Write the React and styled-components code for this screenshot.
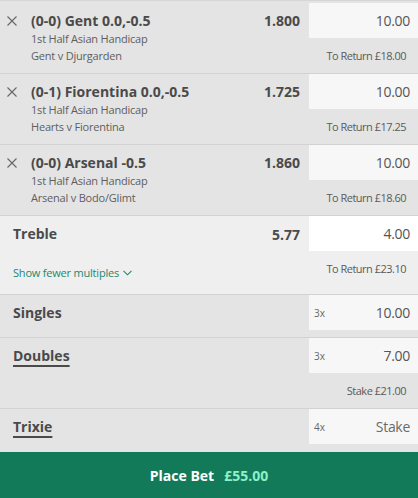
import React from "react";
import styled, { createGlobalStyle } from "styled-components";

const Global = createGlobalStyle`
  html, body { margin: 0; padding: 0; background: #e4e4e4; }
  body { font-family: "Open Sans", "Noto Sans", sans-serif; color: #4a4a4a; }
  * { box-sizing: border-box; }
`;

const Slip = styled.div`
  width: 418px;
  border-top: 1px solid #d6d6d6;
  padding-top: 2px;
  background: #e4e4e4;
`;

const SelectionRow = styled.div`
  display: flex;
  height: 71px;
  background: #e4e4e4;
  border-bottom: 1px solid #d2d2d2;
`;

const Close = styled.button`
  width: 31px;
  flex: none;
  border: 0;
  background: none;
  padding: 13px 0 0 7px;
  display: flex;
  align-items: flex-start;
  cursor: pointer;
`;

const Info = styled.div`
  flex: 1;
  display: flex;
  flex-direction: column;
  padding-top: 7px;
  padding-right: 9px;
  min-width: 0;
`;

const TitleLine = styled.div`
  display: flex;
  justify-content: space-between;
  align-items: center;
  height: 20px;
`;

const Title = styled.span`
  font-size: 14px;
  font-weight: 700;
  color: #4a4a4a;
`;

const Odds = styled.span`
  font-size: 14px;
  font-weight: 700;
  color: #4a4a4a;
`;

const Sub = styled.div`
  font-size: 11px;
  line-height: 17px;
  color: #5e5e5e;
  letter-spacing: -0.2px;
`;

const RightCol = styled.div`
  width: 109px;
  flex: none;
  display: flex;
  flex-direction: column;
`;

const Stake = styled.div`
  height: 35px;
  background: ${(p) => (p.$white ? "#ffffff" : "#f7f7f7")};
  display: flex;
  align-items: center;
  justify-content: space-between;
  padding: 0 8px 0 5px;
  font-size: 14px;
  letter-spacing: -0.3px;
  color: ${(p) => (p.$placeholder ? "#6a6a6a" : "#555")};
`;

const Mult = styled.span`
  font-size: 10px;
  letter-spacing: 0;
  color: #666;
`;

const Note = styled.div`
  margin-top: 10px;
  font-size: 11px;
  line-height: 16px;
  letter-spacing: -0.5px;
  text-align: right;
  padding-right: 12px;
  color: #5a5a5a;
`;

const Section = styled.div`
  display: flex;
  height: ${(p) => p.$h}px;
  background: ${(p) => p.$bg || "#e4e4e4"};
  border-bottom: ${(p) => (p.$noBorder ? "0" : "1px solid #d2d2d2")};
`;

const Left = styled.div`
  flex: 1;
  display: flex;
  flex-direction: column;
  padding: 7px 9px 0 13px;
`;

const Label = styled.span`
  font-size: 14px;
  font-weight: 700;
  color: #4a4a4a;
  line-height: 22px;
  align-self: flex-start;
  ${(p) =>
    p.$underline &&
    `
    text-decoration: underline;
    text-decoration-thickness: 2px;
    text-underline-offset: 4px;
  `}
`;

const TopLine = styled.div`
  display: flex;
  justify-content: space-between;
  align-items: center;
`;

const Link = styled.a`
  margin-top: 20px;
  font-size: 11px;
  letter-spacing: -0.2px;
  color: #23876f;
  display: flex;
  align-items: center;
  gap: 4px;
  cursor: pointer;
`;

const PlaceBet = styled.button`
  width: 418px;
  height: 46px;
  border: 0;
  background: #137a59;
  display: flex;
  align-items: center;
  justify-content: center;
  gap: 10px;
  font-family: inherit;
  font-size: 14px;
  font-weight: 700;
  color: #fff;
  padding: 0;
`;

const Amount = styled.span`
  color: #8cf0c8;
`;

const XIcon = () => (
  <svg width="10" height="10" viewBox="0 0 10 10">
    <path d="M0.5 0.5 L9.5 9.5 M9.5 0.5 L0.5 9.5" stroke="#666" strokeWidth="1.1" />
  </svg>
);

const Chevron = () => (
  <svg width="9" height="6" viewBox="0 0 9 6">
    <path d="M0.5 0.8 L4.5 4.8 L8.5 0.8" fill="none" stroke="#23876f" strokeWidth="1.1" />
  </svg>
);

const selections = [
  { title: "(0-0) Gent 0.0,-0.5", market: "1st Half Asian Handicap", event: "Gent v Djurgarden", odds: "1.800", stake: "10.00", ret: "£18.00" },
  { title: "(0-1) Fiorentina 0.0,-0.5", market: "1st Half Asian Handicap", event: "Hearts v Fiorentina", odds: "1.725", stake: "10.00", ret: "£17.25" },
  { title: "(0-0) Arsenal -0.5", market: "1st Half Asian Handicap", event: "Arsenal v Bodo/Glimt", odds: "1.860", stake: "10.00", ret: "£18.60" },
];

export default function App() {
  return (
    <>
      <Global />
      <Slip>
        {selections.map((s) => (
          <SelectionRow key={s.title}>
            <Close aria-label="remove">
              <XIcon />
            </Close>
            <Info>
              <TitleLine>
                <Title>{s.title}</Title>
                <Odds>{s.odds}</Odds>
              </TitleLine>
              <Sub>{s.market}</Sub>
              <Sub>{s.event}</Sub>
            </Info>
            <RightCol>
              <Stake>
                <span />
                <span>{s.stake}</span>
              </Stake>
              <Note>To Return {s.ret}</Note>
            </RightCol>
          </SelectionRow>
        ))}

        <Section $h={79} $bg="#efefef">
          <Left>
            <TopLine>
              <Label>Treble</Label>
              <Odds>5.77</Odds>
            </TopLine>
            <Link>
              Show fewer multiples <Chevron />
            </Link>
          </Left>
          <RightCol>
            <Stake $white>
              <span />
              <span>4.00</span>
            </Stake>
            <Note>To Return £23.10</Note>
          </RightCol>
        </Section>

        <Section $h={43}>
          <Left>
            <Label>Singles</Label>
          </Left>
          <RightCol>
            <Stake>
              <Mult>3x</Mult>
              <span>10.00</span>
            </Stake>
          </RightCol>
        </Section>

        <Section $h={71}>
          <Left>
            <Label $underline>Doubles</Label>
          </Left>
          <RightCol>
            <Stake>
              <Mult>3x</Mult>
              <span>7.00</span>
            </Stake>
            <Note>Stake £21.00</Note>
          </RightCol>
        </Section>

        <Section $h={43} $noBorder>
          <Left>
            <Label $underline>Trixie</Label>
          </Left>
          <RightCol>
            <Stake $placeholder>
              <Mult>4x</Mult>
              <span>Stake</span>
            </Stake>
          </RightCol>
        </Section>

        <PlaceBet>
          <span>Place Bet</span>
          <Amount>£55.00</Amount>
        </PlaceBet>
      </Slip>
    </>
  );
}
